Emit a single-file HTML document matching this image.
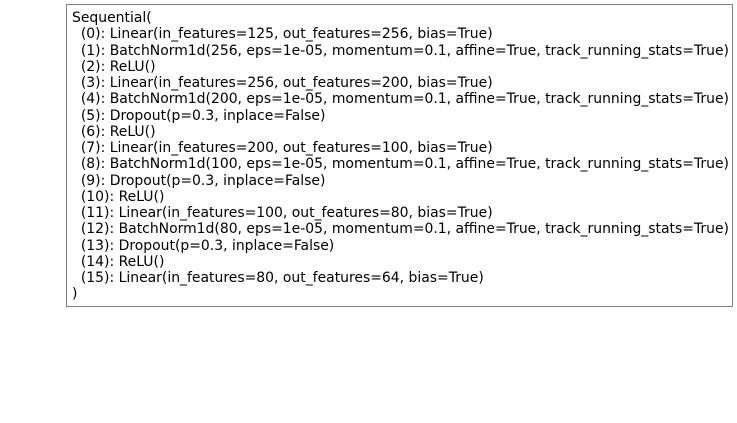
<!DOCTYPE html>
<html><head><style>
body{margin:0;width:737px;height:423px;background:#fff;position:relative;overflow:hidden}
.box{position:absolute;left:66px;top:4px;width:665px;height:301px;border:1px solid #808080;background:#fff}
pre{position:absolute;left:72px;top:10px;margin:0;font-family:"DejaVu Sans",sans-serif;font-size:13.95px;line-height:16.25px;color:#000;white-space:pre}
</style></head><body>
<div class="box"></div>
<pre>Sequential(
  (0): Linear(in_features=125, out_features=256, bias=True)
  (1): BatchNorm1d(256, eps=1e-05, momentum=0.1, affine=True, track_running_stats=True)
  (2): ReLU()
  (3): Linear(in_features=256, out_features=200, bias=True)
  (4): BatchNorm1d(200, eps=1e-05, momentum=0.1, affine=True, track_running_stats=True)
  (5): Dropout(p=0.3, inplace=False)
  (6): ReLU()
  (7): Linear(in_features=200, out_features=100, bias=True)
  (8): BatchNorm1d(100, eps=1e-05, momentum=0.1, affine=True, track_running_stats=True)
  (9): Dropout(p=0.3, inplace=False)
  (10): ReLU()
  (11): Linear(in_features=100, out_features=80, bias=True)
  (12): BatchNorm1d(80, eps=1e-05, momentum=0.1, affine=True, track_running_stats=True)
  (13): Dropout(p=0.3, inplace=False)
  (14): ReLU()
  (15): Linear(in_features=80, out_features=64, bias=True)
)</pre>
</body></html>
